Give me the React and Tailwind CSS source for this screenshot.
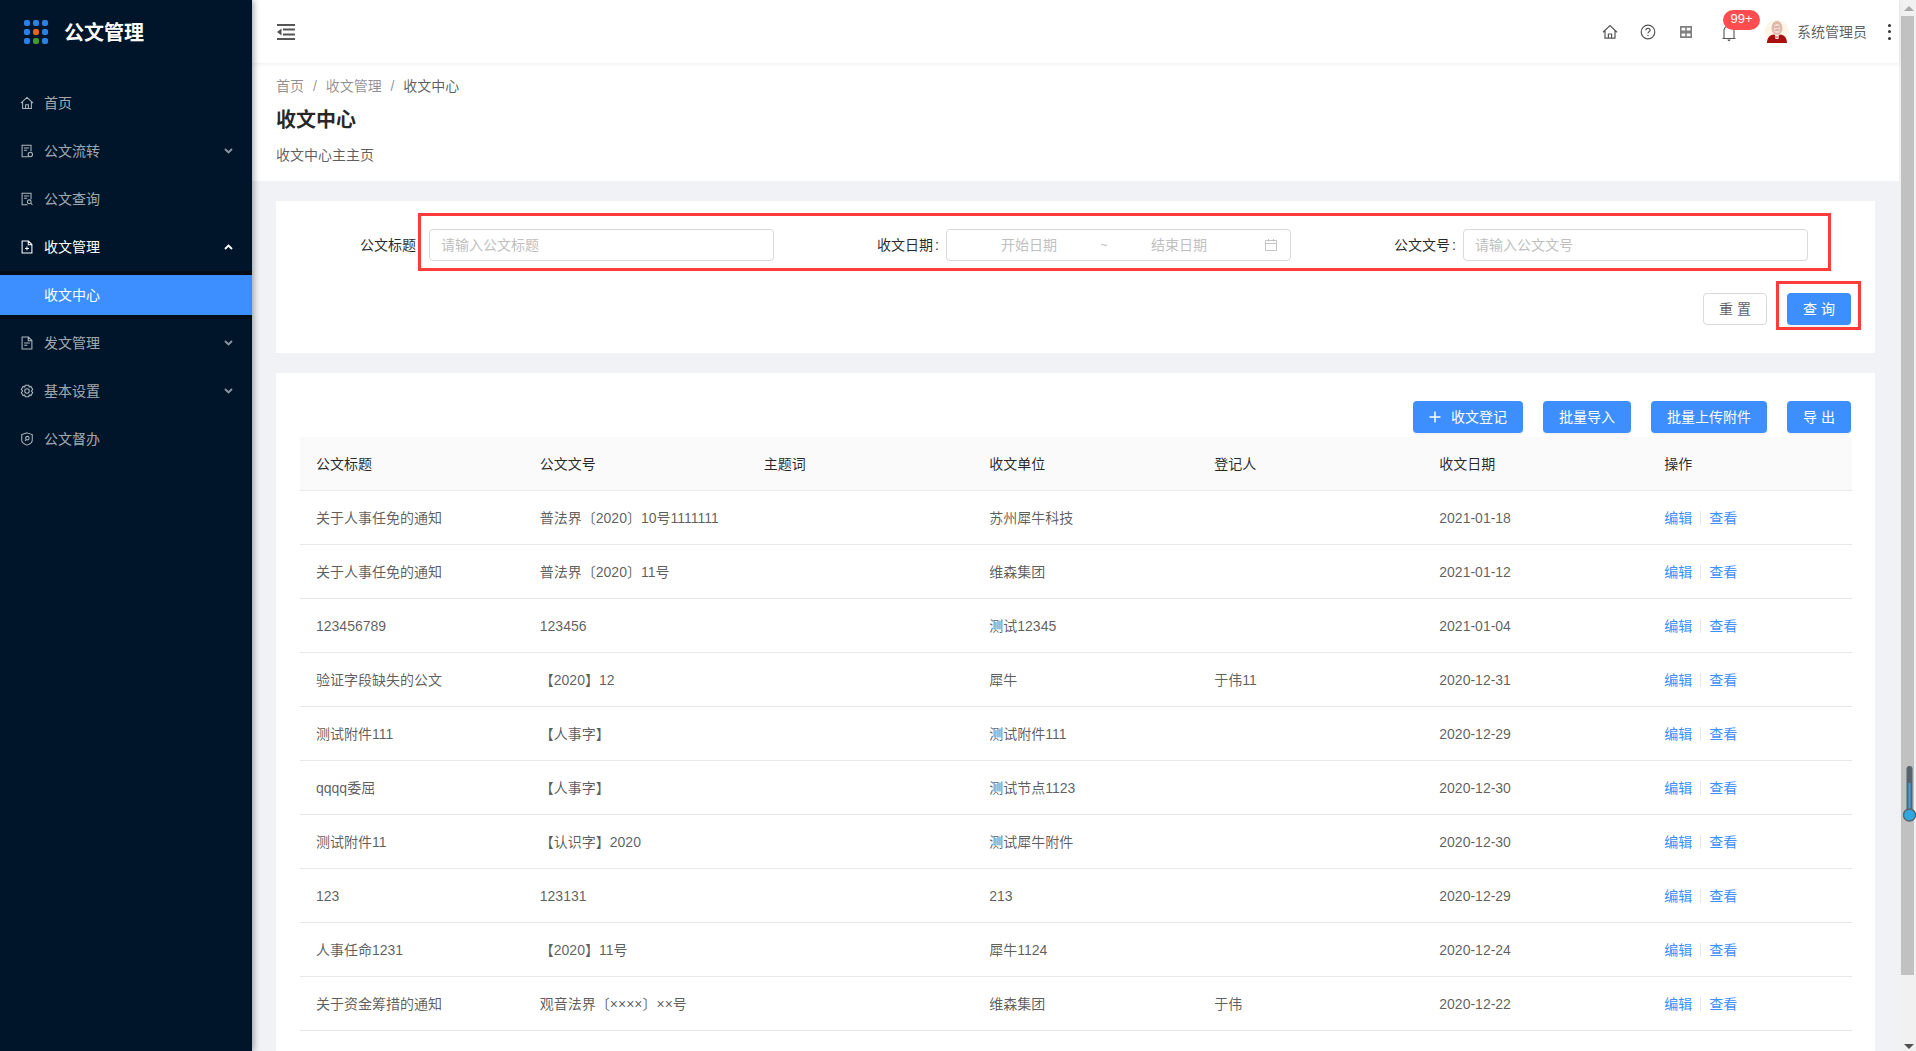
import React from 'react';

const rows = [
  ['关于人事任免的通知', '普法界〔2020〕10号1111111', '', '苏州犀牛科技', '', '2021-01-18'],
  ['关于人事任免的通知', '普法界〔2020〕11号', '', '维森集团', '', '2021-01-12'],
  ['123456789', '123456', '', '测试12345', '', '2021-01-04'],
  ['验证字段缺失的公文', '【2020】12', '', '犀牛', '于伟11', '2020-12-31'],
  ['测试附件111', '【人事字】', '', '测试附件111', '', '2020-12-29'],
  ['qqqq委屈', '【人事字】', '', '测试节点1123', '', '2020-12-30'],
  ['测试附件11', '【认识字】2020', '', '测试犀牛附件', '', '2020-12-30'],
  ['123', '123131', '', '213', '', '2020-12-29'],
  ['人事任命1231', '【2020】11号', '', '犀牛1124', '', '2020-12-24'],
  ['关于资金筹措的通知', '观音法界〔××××〕××号', '', '维森集团', '于伟', '2020-12-22'],
];

const columns = ['公文标题', '公文文号', '主题词', '收文单位', '登记人', '收文日期', '操作'];

const Svg = ({ children, size = 16, className = '' }) => (
  <svg width={size} height={size} viewBox="0 0 16 16" fill="none" stroke="currentColor" strokeWidth="1.2" className={className}>
    {children}
  </svg>
);

const HomeIcon = ({ className }) => (
  <Svg className={className}>
    <path d="M1 8.2 8 1.6l7 6.6M3 6.6V14.2h10V6.6M6.4 14.2V10h3.2v4.2" />
  </Svg>
);
const FlowIcon = () => (
  <Svg>
    <path d="M10 14.600H2.400V1.400h10.200v7M4.600 4.600h5.800M4.600 7.200h3.400" />
    <circle cx="11.800" cy="12" r="2.500" />
  </Svg>
);
const SearchDocIcon = () => (
  <Svg>
    <path d="M8.600 14.600H2.400V1.400h10.200v6.800M4.600 4.600h5.800M4.600 7.200h3.400" />
    <circle cx="10.600" cy="11.200" r="2.200" />
    <path d="m12.200 12.800 2 1.800" />
  </Svg>
);
const FileAddIcon = () => (
  <Svg>
    <path d="M2.400 1.200h7.200l4 4v9.600H2.400zM9.400 1.400v4h4M8 7.400v4.400M5.800 9.600h4.400" />
  </Svg>
);
const FileTextIcon = () => (
  <Svg>
    <path d="M2.400 1.200h7.200l4 4v9.600H2.400zM9.400 1.400v4h4M4.800 8h6.400M4.800 10.600h3.600" />
  </Svg>
);
const GearIcon = () => (
  <Svg>
    <path d="M6 1.400h4l.6 2 1.900-.6 2 3.400-1.400 1.800 1.400 1.800-2 3.400-1.900-.6-.6 2H6l-.6-2-1.900.6-2-3.400L2.900 8 1.500 6.200l2-3.400 1.900.6z" />
    <circle cx="8" cy="8" r="2.600" />
  </Svg>
);
const ShieldIcon = () => (
  <Svg>
    <path d="M8 1 14 3v6.400c0 2.600-3 4.600-6 5.600-3-1-6-3-6-5.600V3z" />
    <circle cx="8.400" cy="7" r="2" />
    <path d="M7 8.600 5.800 10.200" />
  </Svg>
);
const Chevron = ({ up = false, bright = false }) => (
  <svg width="9" height="6" viewBox="0 0 9 6" fill="none" stroke={bright ? '#ffffff' : '#8a94a0'} strokeWidth="1.900">
    <path d={up ? 'M1 5 4.500 1.600 8 5' : 'M1 1 4.500 4.400 8 1'} />
  </svg>
);

const navBefore = [
  { label: '首页', icon: <HomeIcon /> },
  { label: '公文流转', icon: <FlowIcon />, arrow: true },
  { label: '公文查询', icon: <SearchDocIcon /> },
];
const navAfter = [
  { label: '发文管理', icon: <FileTextIcon />, arrow: true },
  { label: '基本设置', icon: <GearIcon />, arrow: true },
  { label: '公文督办', icon: <ShieldIcon /> },
];

const NavItem = ({ item }) => (
  <div className="flex h-12 items-center pl-5 pr-[19px] text-[#ffffffa6]">
    <span className="mr-[10px] flex w-[14px] justify-center text-[#b0b6bc]">{item.icon}</span>
    <span className="flex-1">{item.label}</span>
    {item.arrow && <Chevron />}
  </div>
);

const Logo = () => (
  <div className="grid w-6 grid-cols-3 gap-[3.5px]">
    {['#2a82e4', '#2a82e4', '#2a82e4', '#2a82e4', '#e8641b', '#2a82e4', '#2a82e4', '#3f9b2f', '#2a82e4'].map((c, i) => (
      <span key={i} className="h-[5.6px] w-[5.6px] rounded-[2px]" style={{ backgroundColor: c }} />
    ))}
  </div>
);

const Sidebar = () => (
  <aside className="z-20 flex w-[252px] shrink-0 flex-col bg-[#001529] text-sm shadow-[2px_0_6px_rgba(0,21,41,0.35)]">
    <div className="flex h-[63px] items-center pl-6 pt-[1px]">
      <Logo />
      <span className="ml-4 mt-[2px] text-xl font-bold text-white">公文管理</span>
    </div>
    <div className="h-4" />
    {navBefore.map((item) => (
      <NavItem key={item.label} item={item} />
    ))}
    <div className="flex h-12 items-center pl-5 pr-[19px] text-white">
      <span className="mr-[10px] flex w-[14px] justify-center"><FileAddIcon /></span>
      <span className="flex-1">收文管理</span>
      <Chevron up bright />
    </div>
    <div className="bg-[#000c17] py-1">
      <div className="flex h-10 items-center bg-[#3d8fff] pl-11 text-white">收文中心</div>
    </div>
    {navAfter.map((item) => (
      <NavItem key={item.label} item={item} />
    ))}
  </aside>
);

const Avatar = () => (
  <svg width="24" height="24" viewBox="0 0 24 24">
    <circle cx="12" cy="12" r="12" fill="#fdf6e6" />
    <path d="M2 23c0-5 2.500-8 7-8.500l3 2.500 3-2.500c4.500.5 7 3.500 7 8.500z" fill="#a90f0f" />
    <path d="M10 15.500 12 18l2-2.500-.5 3.500h-3z" fill="#f6e9e2" />
    <ellipse cx="12" cy="8" rx="5.500" ry="7" fill="#dfb9ad" />
    <ellipse cx="12" cy="8.500" rx="3" ry="4.500" fill="#f3dcd2" />
    <path d="M9.500 7h5M10 10h4" stroke="#c08d80" strokeWidth="1" />
  </svg>
);

const Header = () => (
  <header className="relative z-10 flex h-[63px] shrink-0 items-center bg-white pl-[25px] pr-2 shadow-[0_1px_4px_rgba(0,21,41,0.08)]">
    <svg width="18" height="16" viewBox="0 0 18 16" className="text-[#555]" fill="currentColor">
      <rect x="0" y="0" width="18" height="2" />
      <rect x="0" y="14" width="18" height="2" />
      <rect x="6" y="4.500" width="12" height="2" />
      <rect x="6" y="9.500" width="12" height="2" />
      <path d="M4.500 4.500v7L0 8z" />
    </svg>
    <div className="flex-1" />
    <span className="text-[#555]"><HomeIcon /></span>
    <svg width="16" height="16" viewBox="0 0 16 16" fill="none" stroke="#555" strokeWidth="1.200" className="ml-[22px]">
      <circle cx="8" cy="8" r="6.800" />
      <path d="M5.900 6.300c0-1.300 1-2 2.100-2s2.100.8 2.100 1.900c0 1.600-2.100 1.600-2.100 3.100" />
      <circle cx="8" cy="11.500" r=".7" fill="#555" stroke="none" />
    </svg>
    <svg width="14" height="14" viewBox="0 0 14 14" fill="#808080" className="ml-[23px]">
      <path fillRule="evenodd" d="M1 1h12v12H1zM2.600 2.800v2.600h3.600V2.800zm5.200 0v2.600h3.600V2.800zM2.600 8.600v2.600h3.600V8.600zm5.200 0v2.600h3.600V8.600z" />
    </svg>
    <div className="relative ml-[29px] text-[#555]">
      <svg width="14" height="18" viewBox="0 0 14 18" fill="none" stroke="currentColor" strokeWidth="1.100" className="mt-1 block">
        <path d="M2 13V5.500C2 3 4 1 7 1s5 2 5 4.500V13M.5 13.500h13" />
        <path d="M5.500 14.500c.2 1 .8 1.500 1.500 1.500s1.300-.5 1.500-1.500z" fill="currentColor" stroke="none" />
      </svg>
      <span className="absolute left-[1px] top-[-11px] flex h-5 w-[37px] items-center justify-center rounded-full bg-[#ff4d4f] text-[13px] text-white">99+</span>
    </div>
    <div className="ml-[29px]"><Avatar /></div>
    <span className="ml-2 text-sm text-[#000000a6]">系统管理员</span>
    <div className="ml-[21px] flex flex-col gap-[3.500px]">
      <span className="h-[3px] w-[3px] rounded-full bg-[#333]" />
      <span className="h-[3px] w-[3px] rounded-full bg-[#333]" />
      <span className="h-[3px] w-[3px] rounded-full bg-[#333]" />
    </div>
  </header>
);

const Field = ({ label, children }) => (
  <>
    <label className="flex w-[172px] shrink-0 items-center justify-end text-[#000000d9]">
      {label}
      <span className="ml-[2px] mr-[7px]">:</span>
    </label>
    {children}
  </>
);

const inputClass =
  'h-8 w-[345px] rounded border border-[#d9d9d9] bg-white px-[11px] text-sm outline-none placeholder:text-[#bfbfbf]';

const Btn = ({ children, className = '' }) => (
  <button className={`flex h-8 items-center justify-center rounded bg-[#3d8fff] text-sm text-white shadow-[0_2px_0_rgba(0,0,0,0.045)] ${className}`}>
    {children}
  </button>
);

const SearchCard = () => (
  <section className="relative h-[152px] bg-white pl-[153px] pt-7">
    <div className="flex">
      <label className="-ml-[100px] flex h-8 w-[100px] items-center justify-end whitespace-nowrap pr-[7px] text-[#000000d9]">
        公文标题<span className="ml-[2px]">:</span>
      </label>
      <input className={inputClass} placeholder="请输入公文标题" />
      <Field label="收文日期">
        <div className="flex h-8 w-[345px] items-center rounded border border-[#d9d9d9] bg-white pl-3 text-[#bfbfbf]">
          <span className="w-[140px] text-center">开始日期</span>
          <span className="w-[10px] text-center text-xs">~</span>
          <span className="w-[140px] text-center">结束日期</span>
          <svg width="14" height="14" viewBox="0 0 14 14" fill="none" stroke="#c4c4c4" strokeWidth="1" className="ml-[15px]">
            <path d="M1.500 2.500h11v10h-11zM1.500 5.500h11M4.500 1v2.500M9.500 1v2.500" />
          </svg>
        </div>
      </Field>
      <Field label="公文文号">
        <input className={inputClass} placeholder="请输入公文文号" />
      </Field>
    </div>
    <div className="absolute right-6 top-[92px] flex gap-5">
      <button className="h-8 w-[64px] rounded border border-[#d9d9d9] bg-white text-sm text-[#000000a6]">重 置</button>
      <Btn className="w-[64px]">查 询</Btn>
    </div>
    {/* annotation boxes drawn on the screenshot */}
    <div className="pointer-events-none absolute left-[142px] top-3 h-[58px] w-[1413px] border-[3px] border-[#ff3b3b]" />
    <div className="pointer-events-none absolute left-[1500px] top-20 h-[49px] w-[85px] border-[3px] border-[#ff3b3b]" />
  </section>
);

const TableCard = () => (
  <section className="mt-5 flex-1 bg-white px-6 pt-7">
    <div className="flex justify-end gap-5">
      <Btn className="w-[110px]">
        <svg width="12" height="12" viewBox="0 0 12 12" stroke="#fff" strokeWidth="1.500" className="mr-[10px]">
          <path d="M6 .5v11M.5 6h11" />
        </svg>
        收文登记
      </Btn>
      <Btn className="w-[88px]">批量导入</Btn>
      <Btn className="w-[116px]">批量上传附件</Btn>
      <Btn className="w-[64px]">导 出</Btn>
    </div>
    <table className="mt-1 w-[1552px] table-fixed border-collapse text-left text-sm">
      <colgroup>
        <col className="w-[223.8px]" />
        <col className="w-[224px]" />
        <col className="w-[225.5px]" />
        <col className="w-[225px]" />
        <col className="w-[225px]" />
        <col className="w-[225px]" />
        <col />
      </colgroup>
      <thead>
        <tr className="h-[53px] border-b border-[#e8e8e8] bg-[#fafafa]">
          {columns.map((c) => (
            <th key={c} className="px-4 pt-[2px] font-normal text-[#000000d9]">{c}</th>
          ))}
        </tr>
      </thead>
      <tbody>
        {rows.map((row, i) => (
          <tr key={i} className="h-[54px] border-b border-[#e8e8e8] text-[#000000a6]">
            {row.map((cell, j) => (
              <td key={j} className="whitespace-nowrap px-4 pt-[2px]">{cell}</td>
            ))}
            <td className="px-4 pt-[2px] text-[#3d8fff]">
              <span>编辑</span>
              <span className="mx-2 inline-block h-[14px] w-px translate-y-[2px] bg-[#e8e8e8]" />
              <span>查看</span>
            </td>
          </tr>
        ))}
      </tbody>
    </table>
  </section>
);

const Scrollbar = () => (
  <div className="relative flex w-[17px] shrink-0 flex-col bg-[#f1f1f1]">
    <div className="flex h-4 items-center justify-center pl-[2px]">
      <span className="h-0 w-0 border-x-[5px] border-b-[5px] border-x-transparent border-b-[#a8a8a8]" />
    </div>
    <div className="ml-[2px] h-[959px] w-[13px] bg-[#c1c1c1]" />
    <div className="flex flex-1 items-end justify-center pb-[2px] pl-[2px]">
      <span className="h-0 w-0 border-x-[5px] border-t-[5px] border-x-transparent border-t-[#505050]" />
    </div>
    <svg width="13" height="58" viewBox="0 0 13 58" className="absolute left-1 top-[765px]">
      <rect x="3.500" y="1" width="6" height="50" rx="3" fill="#56646f" />
      <rect x="5.500" y="18" width="2" height="34" fill="#2fa8e0" />
      <circle cx="6.500" cy="50" r="6" fill="#2fa8e0" stroke="#56646f" strokeWidth="1.400" />
    </svg>
  </div>
);

export default function App() {
  return (
    <div className="flex h-[1051px] w-full overflow-hidden bg-[#f0f2f5] font-['Liberation_Sans','Noto_Sans_CJK_SC',sans-serif] text-sm">
      <Sidebar />
      <main className="flex min-w-0 flex-1 flex-col">
        <Header />
        <div className="h-[118px] shrink-0 bg-white pl-6 pt-[13px]">
          <div className="flex h-[19px] items-center text-[#00000073]">
            <span>首页</span>
            <span className="mx-[8.9px]">/</span>
            <span>收文管理</span>
            <span className="mx-[8.9px]">/</span>
            <span className="text-[#000000a6]">收文中心</span>
          </div>
          <h1 className="mt-[11px] text-xl font-bold leading-7 text-[#000000d9]">收文中心</h1>
          <p className="mt-[11px] leading-5 text-[#000000a6]">收文中心主主页</p>
        </div>
        <div className="flex flex-1 flex-col pl-6 pr-6 pt-5">
          <SearchCard />
          <TableCard />
        </div>
      </main>
      <Scrollbar />
    </div>
  );
}
